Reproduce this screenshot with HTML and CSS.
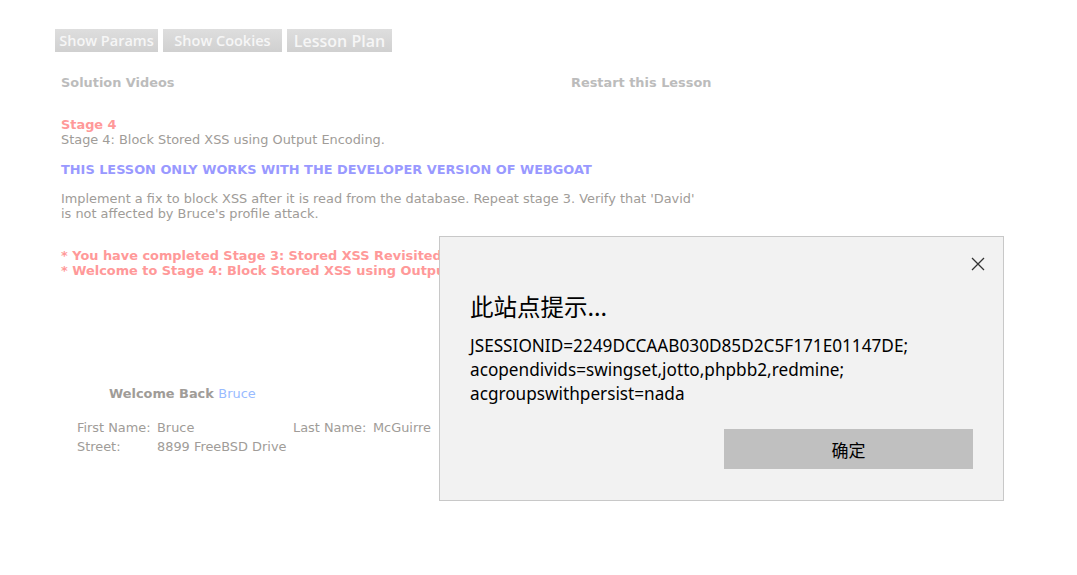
FILE: index.html
```html
<!DOCTYPE html>
<html>
<head>
<meta charset="utf-8">
<link rel="stylesheet" href="styles.css">
</head>
<body>
<div class="page">
  <div class="toolbar">
    <span class="tbtn">Show Params</span>
    <span class="tbtn">Show Cookies</span>
    <span class="tbtn">Lesson Plan</span>
  </div>
  <div class="links">
    <span class="link solution">Solution Videos</span>
    <span class="link restart">Restart this Lesson</span>
  </div>
  <div class="lesson">
    <div class="stage">Stage 4</div>
    <div class="text">Stage 4: Block Stored XSS using Output Encoding.</div>
    <div class="dev">THIS LESSON ONLY WORKS WITH THE DEVELOPER VERSION OF WEBGOAT</div>
    <div class="text desc">Implement a fix to block XSS after it is read from the database. Repeat stage 3. Verify that 'David'<br>is not affected by Bruce's profile attack.</div>
    <div class="msgs">
      <div>* You have completed Stage 3: Stored XSS Revisited.</div>
      <div>* Welcome to Stage 4: Block Stored XSS using Output Encoding</div>
    </div>
  </div>
  <div class="profile">
    <div class="welcome">Welcome Back <span class="name">Bruce</span></div>
    <div class="fields">
      <div class="row"><span class="lbl">First Name:</span><span class="val">Bruce</span><span class="lbl2">Last Name:</span><span class="val">McGuirre</span></div>
      <div class="row"><span class="lbl">Street:</span><span class="val">8899 FreeBSD Drive</span></div>
    </div>
  </div>
</div>
<div class="dialog">
  <div class="dlg-top">
    <svg class="close" width="14" height="14" viewBox="0 0 14 14"><path d="M1 1 L13 13 M13 1 L1 13" stroke="#333" stroke-width="1.3" fill="none"/></svg>
  </div>
  <div class="dlg-title">此站点提示...</div>
  <div class="dlg-body">JSESSIONID=2249DCCAAB030D85D2C5F171E01147DE;<br>acopendivids=swingset,jotto,phpbb2,redmine;<br>acgroupswithpersist=nada</div>
  <div class="dlg-actions"><span class="ok">确定</span></div>
</div>
</body>
</html>
```

FILE: styles.css
```css
html, body {
  margin: 0;
  padding: 0;
  background: #ffffff;
}
body {
  width: 1077px;
  height: 575px;
  overflow: hidden;
  position: relative;
  font-family: "DejaVu Sans", Verdana, sans-serif;
  font-size: 12.9px;
  color: #a09c98;
}
.page {
  padding: 29px 0 0 55px;
}
.toolbar {
  display: flex;
  gap: 5px;
  height: 23px;
}
.tbtn {
  display: flex;
  align-items: center;
  justify-content: center;
  height: 23px;
  padding: 0 2px;
  background: linear-gradient(#dedede, #d0d0d0);
  color: #f6f6f6;
  font-family: "Open Sans", "Liberation Sans", sans-serif;
  font-size: 14.5px;
  font-weight: 600;
}
.tbtn:nth-child(1) { width: 99px; }
.tbtn:nth-child(2) { width: 115px; }
.tbtn:nth-child(3) { width: 101px; font-size: 16px; }
.links {
  display: flex;
  margin: 23px 0 0 6px;
  font-weight: bold;
  color: #bcbcbc;
}
.solution { width: 510px; }
.lesson {
  margin: 27px 0 0 6px;
  line-height: 15px;
}
.stage {
  color: #ff9999;
  font-weight: bold;
}
.dev {
  margin-top: 15px;
  color: #9999ff;
  font-weight: bold;
}
.desc {
  margin-top: 14px;
}
.msgs {
  margin-top: 27px;
  color: #ff9999;
  font-weight: bold;
  white-space: nowrap;
}
.profile {
  margin: 106px 0 0 22px;
  line-height: 19px;
}
.welcome {
  margin-left: 32px;
  font-weight: bold;
  color: #a09c98;
}
.name {
  font-weight: normal;
  color: #99bbff;
}
.fields {
  margin-top: 15px;
}
.row {
  display: flex;
}
.lbl { width: 80px; }
.val { width: 136px; }
.lbl2 { width: 80px; }
.dialog {
  position: absolute;
  left: 439px;
  top: 236px;
  width: 563px;
  height: 263px;
  background: #f2f2f2;
  border: 1px solid #c8c8c8;
  font-family: "Noto Sans", "Noto Sans CJK SC", sans-serif;
  color: #000;
}
.dlg-top {
  display: flex;
  justify-content: flex-end;
  padding: 20px 18px 0 0;
  height: 20px;
}
.close { display: block; }
.dlg-title {
  margin: 13px 0 0 30px;
  font-family: "Noto Sans CJK SC", sans-serif;
  font-size: 23.5px;
  line-height: 32px;
}
.dlg-body {
  margin: 12px 0 0 30px;
  font-size: 17.2px;
  line-height: 24px;
}
.dlg-actions {
  display: flex;
  justify-content: flex-end;
  margin: 23px 30px 0 0;
}
.ok {
  display: flex;
  align-items: center;
  justify-content: center;
  width: 249px;
  height: 40px;
  background: #c0c0c0;
  font-family: "Noto Sans CJK SC", sans-serif;
  font-size: 17px;
}
```
